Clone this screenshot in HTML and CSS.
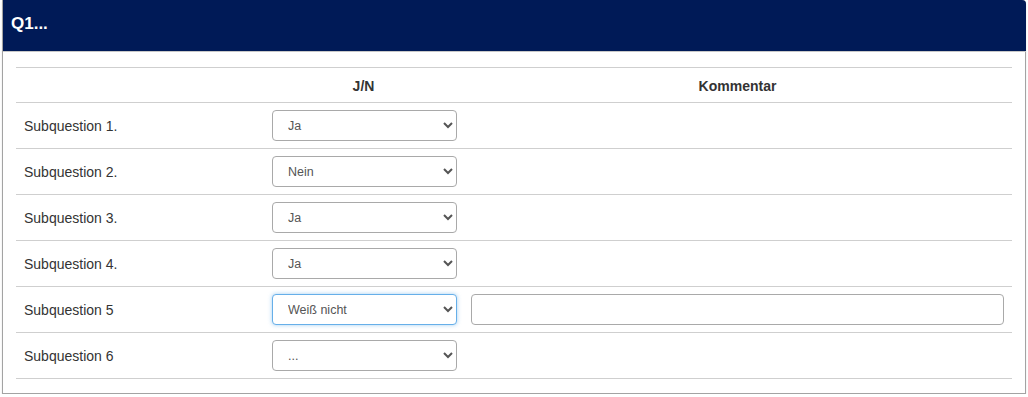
FILE: index.html
```html
<!DOCTYPE html>
<html lang="de">
<head>
<meta charset="utf-8">
<title>Q1</title>
<link rel="stylesheet" href="styles.css">
</head>
<body>
<div class="panel">
  <div class="panel-head">Q1...</div>
  <div class="panel-body">
    <div class="grid">
      <div class="row head">
        <div class="cell"></div>
        <div class="cell center">J/N</div>
        <div class="cell center">Kommentar</div>
      </div>
      <div class="row">
        <div class="cell label">Subquestion 1.</div>
        <div class="cell"><select><option>Ja</option></select></div>
        <div class="cell"></div>
      </div>
      <div class="row">
        <div class="cell label">Subquestion 2.</div>
        <div class="cell"><select><option>Nein</option></select></div>
        <div class="cell"></div>
      </div>
      <div class="row">
        <div class="cell label">Subquestion 3.</div>
        <div class="cell"><select><option>Ja</option></select></div>
        <div class="cell"></div>
      </div>
      <div class="row">
        <div class="cell label">Subquestion 4.</div>
        <div class="cell"><select><option>Ja</option></select></div>
        <div class="cell"></div>
      </div>
      <div class="row">
        <div class="cell label">Subquestion 5</div>
        <div class="cell"><select class="focus"><option>Weiß nicht</option></select></div>
        <div class="cell"><input class="comment" type="text"></div>
      </div>
      <div class="row">
        <div class="cell label">Subquestion 6</div>
        <div class="cell"><select><option>...</option></select></div>
        <div class="cell"></div>
      </div>
    </div>
  </div>
</div>
</body>
</html>
```
FILE: styles.css
```css
html, body {
  margin: 0;
  padding: 0;
  background: #ffffff;
  font-family: "Liberation Sans", Arial, sans-serif;
  color: #333333;
}
.panel {
  margin: 0 2px;
  height: 394px;
  box-sizing: border-box;
  border: 1px solid #a3a3a3;
  border-top: none;
  border-radius: 0 4px 0 0;
  box-shadow: 0 2px 2px rgba(0,0,0,0.12);
  background: #ffffff;
}
.panel-head {
  background: #001a57;
  color: #ffffff;
  font-weight: bold;
  font-size: 17px;
  height: 52px;
  box-sizing: border-box;
  padding: 14px 0 0 8px;
  border-bottom: 1px solid #c8c8c8;
  border-radius: 0 4px 0 0;
  margin: 0 -1px 0 0;
}
.panel-body {
  padding: 15px 13px 0 13px;
}
.grid {
  border-top: 1px solid #cfcfcf;
}
.row {
  display: grid;
  grid-template-columns: 248px 199px 1fr;
  height: 45px;
  border-bottom: 1px solid #cfcfcf;
  align-items: center;
}
.row.head {
  height: 34px;
  font-weight: bold;
}
.cell {
  padding: 0 8px;
  font-size: 14px;
  color: #333333;
}
.center {
  text-align: center;
  padding-top: 1px;
}
.label {
  padding-top: 1px;
}
select {
  display: block;
  width: 185px;
  height: 31px;
  font-family: "Liberation Sans", Arial, sans-serif;
  font-size: 12.5px;
  color: #555555;
  background: #ffffff;
  border: 1px solid #a9a9a9;
  border-radius: 4px;
  padding: 0 8px 0 11px;
  box-sizing: border-box;
}
select.focus {
  border-color: #66afe9;
  box-shadow: 0 0 4px rgba(102,175,233,0.6);
}
.comment {
  display: block;
  width: 100%;
  height: 31px;
  box-sizing: border-box;
  border: 1px solid #a9a9a9;
  border-radius: 4px;
  background: #ffffff;
}
```
